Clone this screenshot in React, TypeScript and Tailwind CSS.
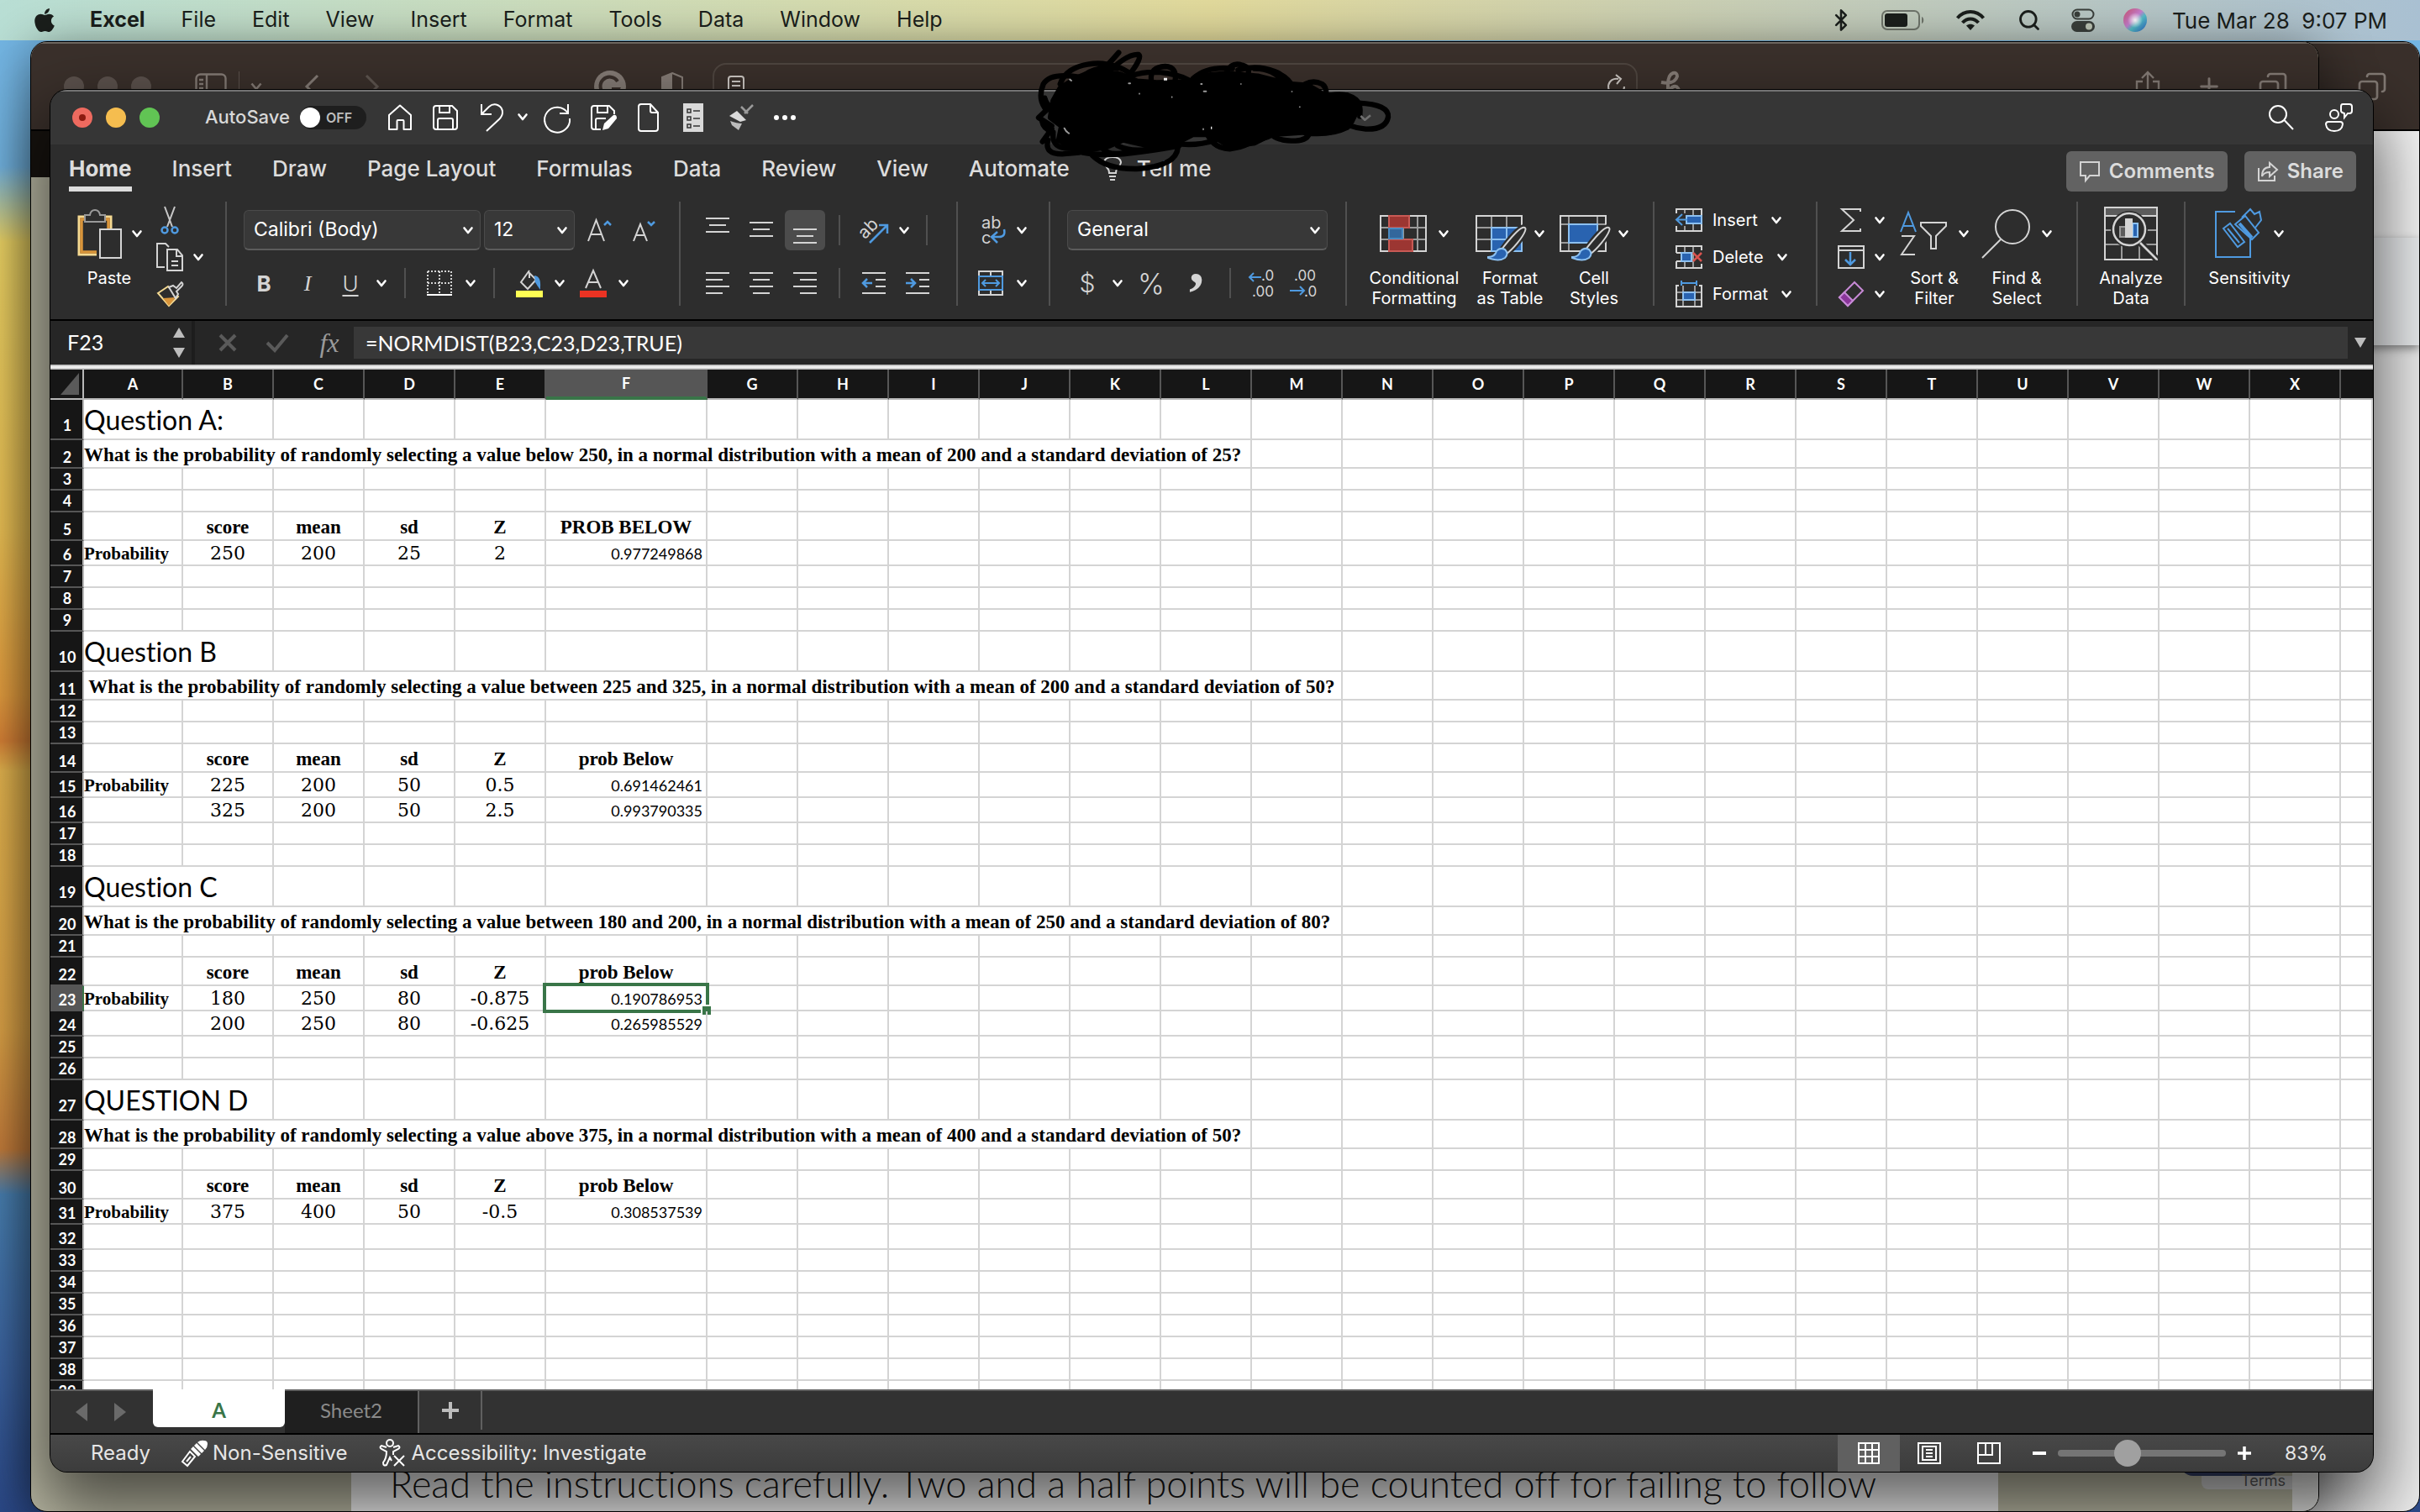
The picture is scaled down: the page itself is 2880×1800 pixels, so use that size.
import type { ReactNode } from "react";
import { Bluetooth, Copy, Plus, Search } from "lucide-react";
import { FaApple } from "react-icons/fa";
import clsx from "clsx";

const UI = "font-['Inter','Liberation_Sans',sans-serif]";
const CALIBRI = "font-['Lato','Liberation_Sans',sans-serif] [font-variant-ligatures:none]";

type SvgProps = { w: number; h: number; className?: string; children: ReactNode };

function Svg({ w, h, className, children }: SvgProps) {
  return (
    <svg
      width={w}
      height={h}
      viewBox={`0 0 ${w} ${h}`}
      fill="none"
      stroke="#d4d4d4"
      strokeWidth={2}
      className={clsx("shrink-0 overflow-visible", className)}
      aria-hidden="true"
    >
      {children}
    </svg>
  );
}

function Chevron({ className }: { className?: string }) {
  return (
    <Svg w={12} h={9} className={className}>
      <path d="M1.5 1.5 6 7l4.5-5.5" stroke="#fff" strokeWidth={2.6} strokeLinecap="round" strokeLinejoin="round" />
    </Svg>
  );
}

function IconButton({ label, className, children }: { label: string; className?: string; children: ReactNode }) {
  return (
    <button aria-label={label} className={clsx("flex shrink-0 items-center justify-center", className)}>
      {children}
    </button>
  );
}

function More({ label, className }: { label: string; className?: string }) {
  return (
    <IconButton label={label} className={clsx("h-6 w-6", className)}>
      <Chevron />
    </IconButton>
  );
}

function Divider() {
  return <div className="h-[124px] w-[2px] shrink-0 bg-[#505050]" />;
}

function SmallDivider({ className }: { className?: string }) {
  return <div className={clsx("h-9 w-[2px] shrink-0 bg-[#505050]", className)} />;
}

/* ---------- menu bar ---------- */

const menus = ["File", "Edit", "View", "Insert", "Format", "Tools", "Data", "Window", "Help"];

function MenuBar() {
  return (
    <header
      className={clsx(
        UI,
        "relative flex h-12 items-center bg-linear-to-r from-[#b9dfd5] via-[#e2da9c] to-[#a9c0d2] pr-[39px] pl-10 text-[25px] text-[#1b1f1c]",
      )}
    >
      <FaApple className="h-8 w-[26px]" />
      <nav className="ml-[41px] flex items-center gap-[43px]">
        <button className="font-bold">Excel</button>
        {menus.map((m) => (
          <button key={m}>{m}</button>
        ))}
      </nav>
      <div className="ml-auto flex items-center">
        <Bluetooth className="h-7 w-7" strokeWidth={2.2} />
        <Svg w={52} h={24} className="ml-[34px]">
          <rect x="1" y="1" width="44" height="22" rx="6" stroke="#6f756b" />
          <rect x="4" y="4" width="27" height="16" rx="3" fill="#1b1f1c" stroke="none" />
          <path d="M48 8c3 1 3 7 0 8z" fill="#6f756b" stroke="none" />
        </Svg>
        <Svg w={34} h={24} className="ml-[37px]">
          <g stroke="#1b1f1c" strokeWidth={4}>
            <path d="M1.5 9.5C10-.5 24-.5 32.5 9.5" />
            <path d="M7.5 15C13 9 21 9 26.5 15" />
          </g>
          <path d="M17 24l-5-5.500c3-2.500 7-2.500 10 0z" fill="#1b1f1c" stroke="none" />
        </Svg>
        <Search className="ml-[39px] h-7 w-7" strokeWidth={2.4} />
        <Svg w={28} h={28} className="ml-[36px]">
          <rect x="1.5" y="1.5" width="25" height="11" rx="5.5" stroke="#3a3f3b" />
          <circle cx="7" cy="7" r="3.5" fill="#3a3f3b" stroke="none" />
          <rect x="0" y="15" width="28" height="13" rx="6.5" fill="#3a3f3b" stroke="none" />
          <circle cx="21" cy="21.5" r="4" fill="#c0c8b8" stroke="none" />
        </Svg>
        <Svg w={28} h={28} className="ml-[34px]">
          <defs>
            <linearGradient id="siri" x1="0" y1="0" x2="1" y2="1">
              <stop offset="0" stopColor="#c8506a" />
              <stop offset=".45" stopColor="#c77fd0" />
              <stop offset=".6" stopColor="#55c0c8" />
              <stop offset="1" stopColor="#2c62c8" />
            </linearGradient>
            <radialGradient id="siriGlow">
              <stop offset="0" stopColor="#fff" />
              <stop offset="1" stopColor="#fff" stopOpacity="0" />
            </radialGradient>
          </defs>
          <circle cx="14" cy="14" r="14" fill="url(#siri)" stroke="none" />
          <circle cx="14" cy="14" r="9" fill="url(#siriGlow)" stroke="none" />
        </Svg>
        <span className="ml-[30px] text-[26px] whitespace-pre">Tue Mar 28{"  "}9:07 PM</span>
      </div>
    </header>
  );
}

/* ---------- browser windows behind ---------- */

function BackWindow() {
  return (
    <div className="absolute inset-y-0 top-[49px] right-0 left-[120px] flex flex-col overflow-hidden rounded-[20px] border border-black bg-[#ededed]">
      <div className="flex h-[106px] shrink-0 items-center justify-end border-t-2 border-b-2 border-t-[#6e6862] border-b-black bg-[#3a302b] pr-[38px] text-[#857c76]">
        <Copy className="h-9 w-9 -scale-x-100" strokeWidth={1.8} />
      </div>
      <div className="h-[127px] shrink-0 bg-[#f6f6f6]" />
      <div className="h-[128px] shrink-0 bg-[#eceef0] shadow-[0_4px_10px_#8a8a8a]" />
    </div>
  );
}

function BrowserToolbar() {
  return (
    <div className="flex h-[106px] shrink-0 items-center border-t-2 border-b-2 border-t-[#6e6862] border-b-black bg-[#3a302b] pr-9 pl-[39px] text-[#857c76]">
      <div className="flex gap-4">
        <span className="h-6 w-6 rounded-full bg-[#5c524d]" />
        <span className="h-6 w-6 rounded-full bg-[#5c524d]" />
        <span className="h-6 w-6 rounded-full bg-[#5c524d]" />
      </div>
      <Svg w={38} h={32} className="ml-[52px]">
        <g stroke="#857c76" strokeWidth={2.4}>
          <rect x="1.5" y="1.5" width="35" height="29" rx="5" />
          <path d="M14 2v28M5 8h5M5 13h5M5 18h5" />
        </g>
      </Svg>
      <div className="ml-[14px] h-9 w-px bg-[#5c524d]" />
      <Svg w={14} h={10} className="ml-[13px]">
        <path d="M1.5 1.5 7 8l5.5-6.5" stroke="#857c76" strokeWidth={2.6} />
      </Svg>
      <Svg w={18} h={30} className="ml-[50px]">
        <path d="M16 2 3 15l13 13" stroke="#857c76" strokeWidth={3} />
      </Svg>
      <Svg w={18} h={30} className="ml-[54px]">
        <path d="m2 2 13 13L2 28" stroke="#5f5650" strokeWidth={3} />
      </Svg>
      <Svg w={38} h={38} className="ml-[255px]">
        <circle cx="19" cy="19" r="19" fill="#857c76" stroke="none" />
        <path d="M28 13a11 11 0 1 0 1 9h-8" stroke="#3a302b" strokeWidth={4} />
      </Svg>
      <Svg w={28} h={34} className="ml-[41px]">
        <path d="M14 1 26 6v15q0 7-12 12Q2 28 2 21V6z" stroke="#857c76" />
        <path d="M14 1v32Q2 28 2 21V6z" fill="#857c76" stroke="none" />
      </Svg>
      <div className="ml-[34px] flex h-[56px] w-[1101px] items-center justify-between rounded-2xl border-2 border-[#4f4640] pr-3 pl-4">
        <Svg w={20} h={26}>
          <rect x="1" y="1" width="18" height="24" rx="3" stroke="#cfcac6" />
          <path d="M5 7h10M5 12h10M5 17h6" stroke="#cfcac6" />
        </Svg>
        <Svg w={22} h={30}>
          <path d="M13 6A9.5 9.5 0 1 0 20 15M10 1l6 5-5 6" stroke="#cfcac6" />
        </Svg>
      </div>
      <Svg w={28} h={36} className="ml-[26px]">
        <path d="M2 13q16 3 19-7 0-5-5-4-6 2-6 14v18M10 24q8-10 12-4 3 5 1 13" stroke="#857c76" strokeWidth={4} />
      </Svg>
      <div className="ml-auto flex items-center gap-[42px]">
        <Svg w={30} h={38}>
          <path d="M9 13H2v23h26V13h-7M15 25V2M8 9l7-7 7 7" stroke="#857c76" strokeWidth={2.4} />
        </Svg>
        <Plus className="h-8 w-8" strokeWidth={2.2} />
        <Copy className="h-9 w-9 -scale-x-100" strokeWidth={1.8} />
      </div>
    </div>
  );
}

function BrowserWindow() {
  return (
    <div className="absolute inset-y-0 top-[49px] right-[120px] left-9 flex flex-col overflow-hidden rounded-[20px] border border-black bg-[#bcbba6] shadow-[0_10px_60px_rgba(0,0,0,0.5)]">
      <BrowserToolbar />
      <div className="h-[55px] shrink-0 bg-[#17130f]" />
      <div className="flex flex-1">
        <div className="w-[381px]" />
        <div className="flex flex-1 items-end bg-[#f4f4f4] pl-[46px] whitespace-nowrap">
          <p className="font-['Lato',sans-serif] text-[45px] leading-[66px] font-light text-[#141414] [font-variant-ligatures:none]">
            Read the instructions carefully. Two and a half points will be counted off for failing to follow
          </p>
        </div>
        <div className="flex w-[350px] flex-col items-end justify-end pb-[26px]">
          <div className="mr-[14px] h-4 w-[120px] rounded-b-2xl bg-[#35406a]" />
          <span className={clsx(UI, "h-4 w-[108px] rounded-bl-lg bg-[#d0d0d0] pr-2 text-right text-lg leading-3 text-[#555]")}>Terms</span>
        </div>
        <div className="w-[31px] bg-[#e6e6e4]" />
      </div>
    </div>
  );
}

/* ---------- excel title bar ---------- */

function TitleBar() {
  return (
    <div className="flex h-[65px] shrink-0 items-center border-t-2 border-t-[#737373] bg-[#363636] pr-[24px] pb-[2px] pl-[26px]">
      <div className="flex gap-4">
        <button aria-label="Close" className="flex h-6 w-6 items-center justify-center rounded-full bg-[#ee6a5f]">
          <span className="h-2 w-2 rounded-full bg-[#8c1a10]" />
        </button>
        <button aria-label="Minimize" className="h-6 w-6 rounded-full bg-[#f5bd4f]" />
        <button aria-label="Zoom" className="h-6 w-6 rounded-full bg-[#61c454]" />
      </div>
      <span className="ml-[54px] w-[100px] text-[22px] font-medium whitespace-nowrap text-[#d8d8d8]">AutoSave</span>
      <button
        role="switch"
        aria-checked="false"
        aria-label="AutoSave"
        className="ml-[13px] flex h-7 w-[79px] items-center gap-[7px] rounded-full bg-[#1e1e1e] text-base font-semibold text-[#bdbdbd]"
      >
        <span className="h-6 w-6 rounded-full bg-white" />
        OFF
      </button>
      <IconButton label="Home" className="ml-[25px]">
        <Svg w={30} h={32}>
          <path d="M2 13 15 1.5 28 13v17h-8.500V20q0-1-1-1h-6q-1 0-1 1v10H2z" stroke="#fff" strokeLinejoin="round" />
        </Svg>
      </IconButton>
      <IconButton label="Save" className="ml-6">
        <Svg w={30} h={32}>
          <path d="M4 2h19l6 6v19q0 3-3 3H4q-3 0-3-3V5q0-3 3-3zM8 2v8h12V2M6 30V19q0-2 2-2h14q2 0 2 2v11" stroke="#fff" />
        </Svg>
      </IconButton>
      <IconButton label="Undo" className="ml-[26px]">
        <Svg w={30} h={34}>
          <path d="M2 1v12h12M2 13 11 4C18-2 27 3 27 11q0 4-4 8L8 33" stroke="#fff" />
        </Svg>
      </IconButton>
      <More label="Undo options" className="ml-[9px]" />
      <IconButton label="Redo" className="ml-[12px]">
        <Svg w={34} h={34}>
          <path d="M30 12A15 15 0 1 0 32 18M30 1v11H20" stroke="#fff" />
        </Svg>
      </IconButton>
      <IconButton label="Save As" className="ml-[23px]">
        <Svg w={32} h={32}>
          <path d="M12 30H4q-3 0-3-3V5q0-3 3-3h18l6 6v4M8 2v8h12V2M6 30V19q0-2 2-2h10" stroke="#fff" />
          <path d="m14 31 2-8 11-10q4-1 4 4L21 29z" fill="#fff" stroke="none" />
        </Svg>
      </IconButton>
      <IconButton label="New" className="ml-6">
        <Svg w={26} h={34}>
          <path d="M4 1h11l9 10v19q0 3-3 3H4q-3 0-3-3V4q0-3 3-3zM15 1v8q0 2 2 2h7" stroke="#fff" />
        </Svg>
      </IconButton>
      <IconButton label="Form" className="ml-[28px]">
        <Svg w={24} h={34}>
          <rect width="24" height="34" fill="#d9d9d9" stroke="none" />
          <path d="M5 7h4v4H5zM5 16h4v4H5zM5 25h4v4H5zM12 9h8M12 18h8M12 27h8" stroke="#333" strokeWidth={1.5} />
        </Svg>
      </IconButton>
      <IconButton label="Clear formatting" className="ml-[26px]">
        <Svg w={34} h={34}>
          <path d="M33 2 23 12M19 4l8 8" stroke="#9a9a9a" strokeWidth={2.5} />
          <path d="m5 15 9-6 11 11-7 2z" fill="#d9d9d9" stroke="none" />
          <path d="M6 21q8 3 14 3l-4 8-8-6z" fill="#bdbdbd" stroke="none" />
        </Svg>
      </IconButton>
      <IconButton label="More" className="ml-[24px] gap-1">
        <span className="h-[6px] w-[6px] rounded-full bg-white" />
        <span className="h-[6px] w-[6px] rounded-full bg-white" />
        <span className="h-[6px] w-[6px] rounded-full bg-white" />
      </IconButton>
      <div className="ml-auto flex items-center gap-9">
        <IconButton label="Search">
          <Svg w={30} h={30}>
            <path d="M19 18.5 29 29M21 11A10 10 0 1 1 1 11a10 10 0 0 1 20 0z" stroke="#fff" />
          </Svg>
        </IconButton>
        <IconButton label="Presence">
          <Svg w={34} h={34}>
            <g stroke="#fff">
              <circle cx="12" cy="13" r="5" />
              <path d="M5 22h14q3 0 3 3-1 8-10 8T2 25q0-3 3-3z" />
              <path d="M22 1h8q3 0 3 3v5q0 3-3 3h-2l-4 5v-5q-4-1-4-3V4q0-3 2-3z" />
            </g>
          </Svg>
        </IconButton>
      </div>
    </div>
  );
}

const tabs = ["Insert", "Draw", "Page Layout", "Formulas", "Data", "Review", "View", "Automate"];

function TabStrip() {
  return (
    <div className="flex h-[68px] shrink-0 items-start pr-5 pl-[22px] text-[#dcdcdc]">
      <nav className="flex items-start gap-12 pt-3 text-[26px] font-medium">
        <button className="border-b-[6px] border-[#dcdcdc] pb-1 leading-[34px] font-bold">Home</button>
        {tabs.map((t) => (
          <button key={t} className="leading-[34px]">
            {t}
          </button>
        ))}
      </nav>
      <button className="ml-10 flex items-center gap-[18px] pt-3 text-[26px] leading-[34px] font-medium">
        <Svg w={22} h={30}>
          <path d="M7 20q0-4-3-7-3-4-3-6 1-6 10-6t10 6q0 2-3 6-3 3-3 7zM7 24h8M8 28h6" />
        </Svg>
        Tell me
      </button>
      <button className="mt-2 ml-auto flex h-12 items-center gap-[10px] rounded-md bg-[#626262] px-[15px] text-2xl font-semibold">
        <Svg w={26} h={26}>
          <path d="M2 2h22v16H13l-5 6v-6H2z" />
        </Svg>
        Comments
      </button>
      <button className="mt-2 ml-5 flex h-12 items-center gap-[10px] rounded-md bg-[#626262] px-[15px] text-2xl font-semibold">
        <Svg w={26} h={26}>
          <path d="M2 9v15h19v-6M15 3l9 8-9 8v-5q-7 0-9 5 0-11 9-11z" />
        </Svg>
        Share
      </button>
    </div>
  );
}

/* ---------- ribbon ---------- */

function BigButton({ icon, lines, chevron, className }: { icon: ReactNode; lines: string[]; chevron?: boolean; className?: string }) {
  return (
    <button className={clsx("flex shrink-0 flex-col items-center pt-[6px] text-white", className)}>
      <span className="flex h-16 items-center">
        {icon}
        {chevron && <Chevron className="ml-[14px]" />}
      </span>
      <span className="mt-[9px] text-center text-xl leading-6 whitespace-nowrap">
        {lines.map((l) => (
          <span key={l} className="block">
            {l}
          </span>
        ))}
      </span>
    </button>
  );
}

function Dropdown({ label, value, className }: { label: string; value: string; className: string }) {
  return (
    <div className={clsx("relative shrink-0", className)}>
      <select
        aria-label={label}
        className="h-12 w-full appearance-none rounded-md border border-b-2 border-[#4a4a4a] border-b-[#5c5c5c] bg-[#383838] pl-[11px] text-[23px] text-white"
      >
        <option>{value}</option>
      </select>
      <Chevron className="pointer-events-none absolute top-5 right-[9px]" />
    </div>
  );
}

function Lines({ d }: { d: string }) {
  return (
    <Svg w={28} h={28}>
      <path d={d} />
    </Svg>
  );
}

const BLUE = "#4f9ae0";

function ClipboardGroup() {
  return (
    <div className="flex w-[208px] shrink-0">
      <BigButton
        className="ml-8 w-[76px]"
        chevron
        lines={["Paste"]}
        icon={
          <Svg w={56} h={60} className="-mr-1">
            <path d="M24 55H3V10h38v15" stroke="#f5da92" strokeWidth={3} />
            <path d="M24 52H6V13h32v12" stroke="#d8943a" strokeWidth={3.5} />
            <path d="M10 8h6q1-6 6-6t6 6h6v8H10z" fill="#2d2d2d" stroke="#9a9a9a" />
            <path d="M28 25h25v34H28z" fill="#2d2d2d" />
          </Svg>
        }
      />
      <div className="ml-[18px] flex flex-col">
        <IconButton label="Cut" className="h-11 w-8">
          <Svg w={22} h={34}>
            <path d="M5 1 14 25M17 1 8 25" stroke="#c8c8c8" />
            <circle cx="5" cy="29" r="3.5" stroke={BLUE} strokeWidth={2.5} />
            <circle cx="17" cy="29" r="3.5" stroke={BLUE} strokeWidth={2.5} />
          </Svg>
        </IconButton>
        <div className="flex h-11 items-center">
          <IconButton label="Copy" className="w-8">
            <Svg w={32} h={34}>
              <path d="M10 29H1V1h10l4 4M13 8h12l6 7v18H13zM24 8v8h7M18 22h8M18 27h8" />
            </Svg>
          </IconButton>
          <More label="Copy options" className="ml-[6px]" />
        </div>
        <IconButton label="Format painter" className="h-11 w-8">
          <Svg w={32} h={32}>
            <path d="M2 15l12-8 12 12-11 11z" stroke="#f5da92" />
            <path d="m8 21 15-1-8 10z" fill="#d8943a" stroke="none" />
            <path d="M15 8l5-2 4 3 6-7q3 2 0 5l-6 6 2 3-3 5z" fill="#2d2d2d" />
          </Svg>
        </IconButton>
      </div>
    </div>
  );
}

function FontGroup() {
  return (
    <div className="flex w-[538px] shrink-0 flex-col gap-[15px] pt-[10px] text-[#d4d4d4]">
      <div className="flex h-12 items-center pl-5">
        <Dropdown label="Font" value="Calibri (Body)" className="w-[282px]" />
        <Dropdown label="Font size" value="12" className="ml-1 w-[108px]" />
        <IconButton label="Increase font size" className="ml-[14px]">
          <Svg w={32} h={28}>
            <path d="M2 27 11.5 2 21 27M5 19h13" />
            <path d="m21 8 4-4 4 4" stroke={BLUE} strokeWidth={2.5} />
          </Svg>
        </IconButton>
        <IconButton label="Decrease font size" className="ml-[22px]">
          <Svg w={30} h={28}>
            <path d="M2 27 10 7l8 20M5 20h10" />
            <path d="m19 4 4 4 4-4" stroke={BLUE} strokeWidth={2.5} />
          </Svg>
        </IconButton>
      </div>
      <div className="flex h-12 items-center pl-[18px] text-[26px]">
        <button aria-label="Bold" className="w-[52px] font-bold">
          B
        </button>
        <button aria-label="Italic" className="w-[52px] font-['Liberation_Serif',serif] italic">
          I
        </button>
        <button aria-label="Underline" className="w-[50px] font-light underline underline-offset-4">
          U
        </button>
        <More label="Underline options" />
        <SmallDivider className="ml-[15px]" />
        <IconButton label="Borders" className="ml-[25px]">
          <Svg w={30} h={30}>
            <path d="M1 1h28M1 15h28M1 1v26M15 1v26M29 1v26" strokeDasharray="2 2" />
            <path d="M0 29h30" stroke="#fff" />
          </Svg>
        </IconButton>
        <More label="Border options" className="ml-[10px]" />
        <SmallDivider className="ml-[15px]" />
        <IconButton label="Fill colour" className="ml-[25px]">
          <Svg w={32} h={34}>
            <path d="m16 2-10 14 8 8 10-11-8-8v6" />
            <path d="M22 9q7 1 6 13-4-6-5-8" fill={BLUE} stroke={BLUE} />
            <path d="M0 26h32v8H0z" fill="#ffff54" stroke="none" />
          </Svg>
        </IconButton>
        <More label="Fill options" className="ml-2" />
        <IconButton label="Font colour" className="ml-3">
          <Svg w={32} h={34}>
            <path d="M7 23 16 2l9 21M10 16h12" />
            <path d="M0 26h32v8H0z" fill="#eb3323" stroke="none" />
          </Svg>
        </IconButton>
        <More label="Font colour options" className="ml-2" />
      </div>
    </div>
  );
}

function AlignGroup() {
  return (
    <div className="flex w-[328px] shrink-0 flex-col gap-[15px] pt-[10px]">
      <div className="flex h-12 items-center pl-5">
        <IconButton label="Top align" className="h-12 w-12">
          <Lines d="M0 0h28M4 8h20M0 16h28" />
        </IconButton>
        <IconButton label="Middle align" className="ml-1 h-12 w-12">
          <Lines d="M0 5h28M4 13h20M0 21h28" />
        </IconButton>
        <IconButton label="Bottom align" className="ml-1 h-12 w-12 rounded-md bg-[#4c4c4c]">
          <Lines d="M0 13h28M4 21h20M0 29h28" />
        </IconButton>
        <SmallDivider className="ml-4" />
        <IconButton label="Orientation" className="ml-6">
          <Svg w={34} h={34}>
            <text x="0" y="24" fontSize="21" fill="#d4d4d4" stroke="none" transform="rotate(-45 8 20)" fontFamily="Inter">
              ab
            </text>
            <path d="m11 32 20-20M22 11h10v10" stroke={BLUE} strokeWidth={2.5} />
          </Svg>
        </IconButton>
        <More label="Orientation options" className="ml-[6px]" />
        <SmallDivider className="ml-[14px]" />
      </div>
      <div className="flex h-12 items-center pl-5">
        <IconButton label="Align left" className="h-12 w-12">
          <Lines d="M0 2h28M0 10h20M0 18h28M0 26h20" />
        </IconButton>
        <IconButton label="Centre" className="ml-1 h-12 w-12">
          <Lines d="M0 2h28M4 10h20M0 18h28M4 26h20" />
        </IconButton>
        <IconButton label="Align right" className="ml-1 h-12 w-12">
          <Lines d="M0 2h28M8 10h20M0 18h28M8 26h20" />
        </IconButton>
        <SmallDivider className="ml-4" />
        <IconButton label="Decrease indent" className="ml-[26px]">
          <Svg w={28} h={28}>
            <path d="M0 2h28M16 10h12M16 18h12M0 26h28" />
            <path d="M12 14H2M6 9l-5 5 5 5" stroke={BLUE} strokeWidth={2.5} />
          </Svg>
        </IconButton>
        <IconButton label="Increase indent" className="ml-6">
          <Svg w={28} h={28}>
            <path d="M0 2h28M16 10h12M16 18h12M0 26h28" />
            <path d="M0 14h10M6 9l5 5-5 5" stroke={BLUE} strokeWidth={2.5} />
          </Svg>
        </IconButton>
      </div>
    </div>
  );
}

function WrapGroup() {
  return (
    <div className="flex w-[108px] shrink-0 flex-col gap-[15px] pt-[10px] pl-6">
      <div className="flex h-12 items-center">
        <IconButton label="Wrap text">
          <Svg w={34} h={36}>
            <g fill="#d4d4d4" stroke="none" fontFamily="Inter" fontSize="20">
              <text x="4" y="16">ab</text>
              <text x="4" y="34">c</text>
            </g>
            <path d="M31 17q2 9-6 9h-8M23 20l-7 6 7 7" stroke={BLUE} strokeWidth={2.5} />
          </Svg>
        </IconButton>
        <More label="Wrap options" className="ml-[6px]" />
      </div>
      <div className="flex h-12 items-center">
        <IconButton label="Merge">
          <Svg w={30} h={30}>
            <path d="M1 1h28v28H1zM15 1v28" />
            <path d="M1 7h28v16H1z" fill="#2d2d2d" stroke={BLUE} />
            <path d="M5 15h20M9 11l-4 4 4 4M21 11l4 4-4 4" stroke={BLUE} />
          </Svg>
        </IconButton>
        <More label="Merge options" className="ml-[10px]" />
      </div>
    </div>
  );
}

function NumberGroup() {
  return (
    <div className="flex w-[351px] shrink-0 flex-col gap-[15px] pt-[10px] text-[#d4d4d4]">
      <div className="flex h-12 items-center pl-5">
        <Dropdown label="Number format" value="General" className="w-[310px]" />
      </div>
      <div className="flex h-12 items-center pl-7">
        <button aria-label="Currency" className="w-8 text-[30px] font-light">
          $
        </button>
        <More label="Currency options" className="ml-2" />
        <button aria-label="Percent" className="ml-2 w-10 text-[34px] font-light">
          %
        </button>
        <IconButton label="Comma style" className="ml-[22px] w-6">
          <Svg w={20} h={28}>
            <text x="1" y="14" fontSize="72" fontWeight="700" fill="#d4d4d4" stroke="none" fontFamily="Liberation Serif">
              ,
            </text>
          </Svg>
        </IconButton>
        <SmallDivider className="ml-[27px]" />
        <IconButton label="Increase decimal" className="ml-[19px]">
          <Svg w={34} h={34}>
            <g fill="#d4d4d4" stroke="none" fontFamily="Inter" fontSize="17">
              <text x="17" y="14">.0</text>
              <text x="6" y="33">.00</text>
            </g>
            <path d="M17 10H3M8 5l-5 5 5 5" stroke={BLUE} />
          </Svg>
        </IconButton>
        <IconButton label="Decrease decimal" className="ml-[17px]">
          <Svg w={34} h={34}>
            <g fill="#d4d4d4" stroke="none" fontFamily="Inter" fontSize="17">
              <text x="5" y="14">.00</text>
              <text x="17" y="33">.0</text>
            </g>
            <path d="M0 26h16M12 21l5 5-5 5" stroke={BLUE} />
          </Svg>
        </IconButton>
      </div>
    </div>
  );
}

function Brush() {
  return (
    <>
      <path d="M31 42C38 32 50 17 56 15q5-1 3 4C56 27 44 41 37 46z" fill="#2d2d2d" stroke="#2d2d2d" strokeWidth={7} />
      <path d="M31 41C38 32 50 17 56 15q5-1 3 4C56 27 44 41 37 46" fill="#2d2d2d" />
      <path d="M15 50q8 0 10-7 4-5 10-2 5 5 0 10-7 5-20 0z" fill="#2963b0" stroke="#8cc0f0" />
    </>
  );
}

function StylesGroup() {
  return (
    <div className="flex w-[364px] shrink-0 pl-[23px]">
      <BigButton
        className="w-[114px]"
        chevron
        lines={["Conditional", "Formatting"]}
        icon={
          <Svg w={56} h={44}>
            <path d="M1 15h54M1 29h54M11 1v42M28 1v42M45 1v42" stroke="#9a9a9a" />
            <path d="M1 1h54v42H1z" />
            <path d="M11 1h24v14H11zM11 29h28v14H11z" fill="#9c3632" stroke="#c85a55" />
            <path d="M11 16h16v12H11z" fill="#33679c" stroke="#4a8ac0" />
          </Svg>
        }
      />
      <BigButton
        className="w-[114px]"
        chevron
        lines={["Format", "as Table"]}
        icon={
          <Svg w={60} h={54} className="mt-[10px] -mr-1">
            <path d="M1 15h54M1 29h54M19 1v42M37 1v42" stroke="#9a9a9a" />
            <path d="M1 1h54v42H1z" />
            <path d="M19 15h36v28H19zM19 29h36M37 15v28" fill="#2963b0" stroke="#8cc0f0" />
            <Brush />
          </Svg>
        }
      />
      <BigButton
        className="w-[86px]"
        chevron
        lines={["Cell", "Styles"]}
        icon={
          <Svg w={60} h={54} className="mt-[10px] -mr-1">
            <path d="M1 11h54M1 33h54M11 1v42M45 1v42" stroke="#9a9a9a" />
            <path d="M1 1h54v42H1z" />
            <path d="M11 11h34v22H11z" fill="#2963b0" stroke="#8cc0f0" />
            <Brush />
          </Svg>
        }
      />
    </div>
  );
}

function CellsGroup() {
  const rows = [
    {
      label: "Insert",
      icon: (
        <>
          <path d="M1 11h30M1 20h30M11 3v26M21 3v26" stroke="#9a9a9a" />
          <path d="M1 3h30v26H1z" />
          <path d="M13 11h18v9H13z" fill="#2963b0" stroke="#8cc0f0" />
          <path d="M0 8h12v15H0z" fill="#2d2d2d" stroke="none" />
          <path d="M14 15.5H1M8 9l-7 6.5 7 6.5" stroke={BLUE} />
        </>
      ),
    },
    {
      label: "Delete",
      icon: (
        <>
          <path d="M11 3v26M21 3v26" stroke="#9a9a9a" />
          <path d="M1 11V3h30v5M1 21v8h30v-5M1 11h8M1 21h8" />
          <path d="M7 11h12v10H7z" fill="#2963b0" stroke="#8cc0f0" />
          <path d="m21 11 10 10M31 11 21 21" stroke="#d9534f" strokeWidth={2.5} />
        </>
      ),
    },
    {
      label: "Format",
      icon: (
        <>
          <path d="M1 14h30M1 23h30M9 6v25M23 6v25" stroke="#9a9a9a" />
          <path d="M4 6H1v25h30V6h-3" />
          <path d="M9 14h14v9H9z" fill="#2963b0" stroke="#8cc0f0" />
          <path d="M7 3h18M7 0v6M25 0v6" stroke={BLUE} />
        </>
      ),
    },
  ];
  return (
    <div className="flex w-[192px] shrink-0 flex-col pl-[25px]">
      {rows.map((r) => (
        <button key={r.label} className="flex h-11 items-center text-xl text-white">
          <Svg w={32} h={32}>{r.icon}</Svg>
          <span className="ml-3">{r.label}</span>
          <Chevron className="ml-4" />
        </button>
      ))}
    </div>
  );
}

function EditingGroup() {
  return (
    <div className="flex w-[308px] shrink-0">
      <div className="ml-[24px] flex flex-col">
        <div className="flex h-11 items-center">
          <IconButton label="AutoSum" className="w-8">
            <Svg w={26} h={28}>
              <path d="M24 4V1H2l14 13L2 27h22v-3" />
            </Svg>
          </IconButton>
          <More label="AutoSum options" className="ml-[6px]" />
        </div>
        <div className="flex h-11 items-center">
          <IconButton label="Fill" className="w-8">
            <Svg w={32} h={28}>
              <path d="M1 1h30v26H1zM1 6h30" />
              <path d="M15 8v14M9 17l6 6 6-6" stroke={BLUE} strokeWidth={2.5} />
            </Svg>
          </IconButton>
          <More label="Fill options" className="ml-[6px]" />
        </div>
        <div className="flex h-11 items-center">
          <IconButton label="Clear" className="w-8">
            <Svg w={32} h={32}>
              <path d="M20 2l10 10-18 18L2 20z" stroke="#c78ad6" />
              <path d="m8 14 10 10-6 6L2 20z" fill="#8a359a" stroke="#c78ad6" />
            </Svg>
          </IconButton>
          <More label="Clear options" className="ml-[6px]" />
        </div>
      </div>
      <BigButton
        className="ml-[10px] w-[86px]"
        chevron
        lines={["Sort &", "Filter"]}
        icon={
          <Svg w={56} h={54}>
            <path d="M1 25 10 2l9 23M4 18h12" stroke={BLUE} />
            <path d="M2 30h15L2 52h16" />
            <path d="M25 14h30v4L43 30v15h-6V30L25 18z" />
          </Svg>
        }
      />
      <BigButton
        className="ml-3 w-[86px]"
        chevron
        lines={["Find &", "Select"]}
        icon={
          <Svg w={58} h={60}>
            <path d="M1 59 23 37" />
            <circle cx="37" cy="22" r="20" />
          </Svg>
        }
      />
    </div>
  );
}

function Ribbon() {
  return (
    <div className="flex h-[142px] shrink-0 border-b-2 border-black">
      <ClipboardGroup />
      <Divider />
      <FontGroup />
      <Divider />
      <AlignGroup />
      <Divider />
      <WrapGroup />
      <Divider />
      <NumberGroup />
      <Divider />
      <StylesGroup />
      <Divider />
      <CellsGroup />
      <Divider />
      <EditingGroup />
      <Divider />
      <BigButton
        className="w-[126px]"
        lines={["Analyze", "Data"]}
        icon={
          <Svg w={64} h={64}>
            <path d="M1 1h62v9H1z" fill="#5c5c5c" stroke="none" />
            <path d="M1 28h62M1 45h62M21 45v18M42 45v18" stroke="#9a9a9a" />
            <path d="M1 1h62v62H1zM1 11h62" />
            <circle cx="30" cy="27" r="22" fill="#2d2d2d" stroke="none" />
            <circle cx="30" cy="27" r="19" strokeWidth={2.5} />
            <path d="m43 43 20 20" stroke="#2d2d2d" strokeWidth={8} />
            <path d="m43 43 20 20" strokeWidth={2.5} />
            <path d="M19 24h7v12h-7z" fill="#5c5c5c" stroke="#9a9a9a" />
            <path d="M34 20h6v16h-6z" fill="#2963b0" stroke="#8cc0f0" />
            <path d="M25 14h9v23h-9z" fill="#d4d4d4" stroke="none" />
          </Svg>
        }
      />
      <Divider />
      <BigButton
        className="ml-6 w-[104px]"
        chevron
        lines={["Sensitivity"]}
        icon={
          <Svg w={56} h={62}>
            <g stroke={BLUE}>
              <path d="M24 5H1v54h41V32" />
              <path d="m10 25 8-6 17 22-8 6zM15 25l14 17" />
              <path d="m24 20 12-10 16 20-8 8z" fill="#2d2d2d" />
              <path d="m29 19 15 17" strokeWidth={4} />
              <path d="m32 12 10-10 5 6 6-3 2 10-7 9" />
            </g>
          </Svg>
        }
      />
    </div>
  );
}

/* ---------- formula bar ---------- */

function FormulaBar() {
  return (
    <div className={clsx(CALIBRI, "flex h-[52px] shrink-0 items-center bg-[#262626] text-white")}>
      <input aria-label="Name box" defaultValue="F23" className="w-[120px] bg-transparent pl-5 text-[25px]" />
      <Svg w={14} h={38} className="ml-[26px]">
        <path d="M7 1l7 12H0zM7 37 0 25h14z" fill="#bdbdbd" stroke="none" />
      </Svg>
      <div className="ml-2 h-full w-1 bg-[#1d1d1d]" />
      <IconButton label="Cancel" className="ml-7">
        <Svg w={22} h={22}>
          <path d="m2 2 18 18M20 2 2 20" stroke="#5a5a5a" strokeWidth={4} />
        </Svg>
      </IconButton>
      <IconButton label="Enter" className="ml-[34px]">
        <Svg w={28} h={22}>
          <path d="m2 11 9 9L26 2" stroke="#5a5a5a" strokeWidth={4} />
        </Svg>
      </IconButton>
      <button
        aria-label="Insert function"
        className="ml-[28px] w-10 font-['Liberation_Serif',serif] text-[32px] leading-8 text-[#9a9a9a] italic"
      >
        fx
      </button>
      <input
        aria-label="Formula"
        defaultValue="=NORMDIST(B23,C23,D23,TRUE)"
        className="ml-[9px] h-[38px] min-w-0 flex-1 bg-[#383838] pl-[14px] text-[25px]"
      />
      <Svg w={14} h={12} className="mx-2">
        <path d="M0 0h14L7 12z" fill="#bdbdbd" stroke="none" />
      </Svg>
    </div>
  );
}

/* ---------- sheet ---------- */

type Cells = { title?: string; question?: string; span?: number; head?: string; data?: string[] };
type Row = Cells & { h: string };

const H26 = "h-[26px]";
const H30 = "h-[30px]";
const H34 = "h-[34px]";
const H48 = "h-[48px]";
const blank: Row = { h: H26 };

const rows: Row[] = [
  { h: H48, title: "Question A:" },
  {
    h: H34,
    span: 12,
    question:
      "What is the probability of randomly selecting a value below 250, in a normal distribution with a mean of 200 and a standard deviation of 25?",
  },
  blank,
  blank,
  { h: H34, head: "PROB BELOW" },
  { h: H30, data: ["Probability", "250", "200", "25", "2", "0.977249868"] },
  blank,
  blank,
  blank,
  { h: H48, title: "Question B" },
  {
    h: H34,
    span: 13,
    question:
      " What is the probability of randomly selecting a value between 225 and 325, in a normal distribution with a mean of 200 and a standard deviation of 50?",
  },
  blank,
  blank,
  { h: H34, head: "prob Below" },
  { h: H30, data: ["Probability", "225", "200", "50", "0.5", "0.691462461"] },
  { h: H30, data: ["", "325", "200", "50", "2.5", "0.993790335"] },
  blank,
  blank,
  { h: H48, title: "Question C" },
  {
    h: H34,
    span: 13,
    question:
      "What is the probability of randomly selecting a value between 180 and 200, in a normal distribution with a mean of 250 and a standard deviation of 80?",
  },
  blank,
  { h: H34, head: "prob Below" },
  { h: H30, data: ["Probability", "180", "250", "80", "-0.875", "0.190786953"] },
  { h: H30, data: ["", "200", "250", "80", "-0.625", "0.265985529"] },
  blank,
  blank,
  { h: H48, title: "QUESTION D" },
  {
    h: H34,
    span: 12,
    question:
      "What is the probability of randomly selecting a value above 375, in a normal distribution with a mean of 400 and a standard deviation of 50?",
  },
  blank,
  { h: H34, head: "prob Below" },
  { h: H30, data: ["Probability", "375", "400", "50", "-0.5", "0.308537539"] },
  { h: H30 },
  blank,
  blank,
  blank,
  blank,
  blank,
  blank,
  blank,
];

const columns = "ABCDEFGHIJKLMNOPQRSTUVWX".split("");
const CELL = "border-r-2 border-b-2 border-[#d4d4d4] px-0 pb-0";
const SERIF_BOLD = "font-['Liberation_Serif',serif] font-bold";

function empties(n: number) {
  return Array.from({ length: n }, (_, i) => <td key={`e${i}`} className={clsx(CELL, "pt-0")} />);
}

function rowCells(row: Row, selected: boolean) {
  if (row.title) {
    return (
      <>
        <td colSpan={2} className={clsx(CELL, "pt-0 align-bottom text-[32px] leading-[44px] whitespace-nowrap")}>
          {row.title}
        </td>
        {empties(23)}
      </>
    );
  }
  if (row.question) {
    return (
      <>
        <td colSpan={row.span} className={clsx(CELL, SERIF_BOLD, "pt-1 text-[23px] leading-7 whitespace-pre")}>
          {row.question}
        </td>
        {empties(25 - (row.span ?? 0))}
      </>
    );
  }
  if (row.head) {
    return (
      <>
        {empties(1)}
        {["score", "mean", "sd", "Z", row.head].map((t) => (
          <td key={t} className={clsx(CELL, SERIF_BOLD, "pt-1 text-center text-[23px] leading-7")}>
            {t}
          </td>
        ))}
        {empties(19)}
      </>
    );
  }
  if (row.data) {
    const [first, ...rest] = row.data;
    const result = rest.pop();
    return (
      <>
        <td className={clsx(CELL, SERIF_BOLD, "pt-[2px] text-[21px] leading-[26px]")}>{first}</td>
        {rest.map((t, i) => (
          <td key={i} className={clsx(CELL, "pt-[2px] text-center font-['DejaVu_Serif',serif] text-[22px] leading-[26px]")}>
            {t}
          </td>
        ))}
        <td className="relative border-r-2 border-b-2 border-[#d4d4d4] p-0 pr-1 text-right align-bottom text-lg leading-[26px]">
          {result}
          {selected && (
            <span className="absolute -inset-x-1 -inset-y-1 border-4 border-[#397548]">
              <span className="absolute -right-[6px] -bottom-[6px] h-3 w-3 border-t-2 border-l-2 border-white bg-[#397548]" />
            </span>
          )}
        </td>
        {empties(19)}
      </>
    );
  }
  return empties(25);
}

function Sheet() {
  return (
    <div className={clsx(CALIBRI, "min-h-0 flex-1 overflow-hidden bg-white text-black")}>
      <table className="w-full table-fixed border-separate border-spacing-0">
        <colgroup>
          <col className="w-10" />
          <col className="w-[118px]" />
          {columns.slice(1).map((c) => (
            <col key={c} className={c === "F" ? "w-[192px]" : "w-[108px]"} />
          ))}
          <col />
        </colgroup>
        <thead>
          <tr className="h-9 bg-[#161616] text-lg text-white">
            <th aria-label="Select all" className="border-r-2 border-b-2 border-[#b8b8b8] p-0">
              <Svg w={24} h={28} className="ml-[11px]">
                <path d="M23 1v26H1z" fill="#5a5a5a" stroke="none" />
              </Svg>
            </th>
            {columns.map((c) => (
              <th
                key={c}
                className={clsx(
                  "border-r-2 p-0",
                  c === "F"
                    ? "border-b-4 border-r-[#565656] border-b-[#397548] bg-[#565656]"
                    : "border-b-2 border-r-[#565656] border-b-[#b8b8b8]",
                )}
              >
                {c}
              </th>
            ))}
            <th className="border-b-2 border-[#b8b8b8] p-0" />
          </tr>
        </thead>
        <tbody>
          {rows.map((row, i) => {
            const selected = i === 22;
            return (
              <tr key={i} className={row.h}>
                <th
                  className={clsx(
                    "border-r-2 border-b-2 pt-0 pr-0 pl-[2px] align-bottom text-lg leading-6 text-white",
                    row.title ? "pb-1" : "pb-0",
                    selected ? "border-r-[#397548] border-b-[#565656] bg-[#565656]" : "border-r-[#b8b8b8] border-b-[#565656] bg-[#161616]",
                  )}
                >
                  {i + 1}
                </th>
                {rowCells(row, selected)}
              </tr>
            );
          })}
        </tbody>
      </table>
    </div>
  );
}

function SheetTabs() {
  return (
    <div className={clsx(CALIBRI, "flex h-[52px] shrink-0 border-t-2 border-[#606060] bg-[#323232] text-2xl font-bold")}>
      <IconButton label="Previous sheet" className="ml-[30px]">
        <Svg w={14} h={22}>
          <path d="M14 0v22L0 11z" fill="#6a6a6a" stroke="none" />
        </Svg>
      </IconButton>
      <IconButton label="Next sheet" className="ml-8">
        <Svg w={14} h={22}>
          <path d="M0 0v22l14-11z" fill="#6a6a6a" stroke="none" />
        </Svg>
      </IconButton>
      <button className="-mt-[2px] ml-8 h-[45px] w-[157px] rounded-b-md bg-white pt-1 text-[#397548]">A</button>
      <button className="w-[160px] border-r-2 border-[#606060] bg-[#1f1f1f] pb-1 font-normal text-[#8a8a8a]">Sheet2</button>
      <IconButton label="Add sheet" className="h-[46px] w-[75px] border-r-2 border-[#606060]">
        <Svg w={20} h={20}>
          <path d="M10 0v20M0 10h20" stroke="#bdbdbd" strokeWidth={4} />
        </Svg>
      </IconButton>
    </div>
  );
}

function StatusBar() {
  return (
    <footer className="flex h-[46px] shrink-0 items-center border-t-2 border-black bg-linear-to-b from-[#484848] to-[#3c3c3c] pr-[54px] pl-12 text-2xl text-[#e6e6e6]">
      <span className="w-[69px]">Ready</span>
      <button className="ml-[38px] flex items-center gap-[6px]">
        <Svg w={32} h={34}>
          <path d="m2 27 6 5 9-11-6-6z" stroke="#fff" />
          <path d="m7 27 5-6" stroke="#fff" />
          <path d="m12 12 9 9 3-3-9-9zM16 8l9 9 3-3-9-9zM20 4l9 9q3-3 3-7 0-4-4-4-4-1-8 2z" fill="#fff" stroke="none" />
        </Svg>
        Non-Sensitive
      </button>
      <button className="ml-[38px] flex items-center gap-[6px]">
        <Svg w={32} h={34}>
          <g stroke="#fff">
            <circle cx="13" cy="5" r="4" />
            <path d="M9 10 3 8q-3 2 0 4l6 3q0 8-4 13 0 5 4 3l4-9 2 4M17 10l6-2q3 2 0 4l-6 3v4" />
            <path d="m18 20 12 12M30 20 18 32" />
          </g>
        </Svg>
        Accessibility: Investigate
      </button>
      <div className="ml-auto flex h-full items-center text-[23px]">
        <IconButton label="Normal view" className="h-full w-[74px] bg-[#606060]">
          <Svg w={26} h={26}>
            <path d="M1 1h24v24H1zM9 1v24M17 1v24M1 9h24M1 17h24" stroke="#fff" />
          </Svg>
        </IconButton>
        <IconButton label="Page layout" className="ml-[21px]">
          <Svg w={28} h={26}>
            <path d="M1 1h26v24H1zM6 5h16v16H6zM10 9h8M10 13h8M10 17h8" stroke="#fff" />
          </Svg>
        </IconButton>
        <IconButton label="Page break preview" className="ml-[43px]">
          <Svg w={28} h={26}>
            <path d="M1 1h26v24H1zM1 15h17V1M10 1v14" stroke="#fff" />
          </Svg>
        </IconButton>
        <IconButton label="Zoom out" className="ml-[38px]">
          <span className="h-1 w-4 bg-white" />
        </IconButton>
        <input
          type="range"
          aria-label="Zoom"
          defaultValue={40}
          className="ml-[14px] h-2 w-[200px] appearance-none rounded-full bg-[#757575] [&::-webkit-slider-thumb]:h-8 [&::-webkit-slider-thumb]:w-8 [&::-webkit-slider-thumb]:appearance-none [&::-webkit-slider-thumb]:rounded-full [&::-webkit-slider-thumb]:bg-[#a0a0a0]"
        />
        <IconButton label="Zoom in" className="ml-[14px]">
          <Svg w={16} h={16}>
            <path d="M8 0v16M0 8h16" stroke="#fff" strokeWidth={3.5} />
          </Svg>
        </IconButton>
        <span className="ml-10">83%</span>
      </div>
    </footer>
  );
}

function ExcelWindow() {
  return (
    <main
      className={clsx(
        UI,
        "absolute top-[107px] right-14 bottom-12 left-[60px] flex flex-col overflow-hidden rounded-[20px] bg-[#2d2d2d] shadow-[0_0_0_1px_#000,0_36px_80px_10px_rgba(0,0,0,0.6)]",
      )}
    >
      <TitleBar />
      <TabStrip />
      <Ribbon />
      <FormulaBar />
      <div className="h-[6px] shrink-0 bg-linear-to-b from-[#a8a8a8] via-white to-[#a8a8a8]" />
      <Sheet />
      <SheetTabs />
      <StatusBar />
    </main>
  );
}

/* Marker scrawl over the document name */
function Scribble() {
  return (
    <svg
      width="450"
      height="165"
      viewBox="0 0 1350 495"
      fill="none"
      stroke="#000"
      strokeWidth={19}
      strokeLinecap="round"
      strokeLinejoin="round"
      className="pointer-events-none absolute top-[50px] left-[1220px]"
      aria-hidden="true"
    >
      <path
        fill="#000"
        d="M125 165 180 130 240 105 340 115 400 140 470 145 590 142 640 120 720 112 830 122 940 150 1010 155 1070 190 1150 190 1190 235 1165 285 1090 322 1000 322 880 330 820 360 730 372 660 330 600 330 550 355 440 370 350 350 290 375 230 385 170 380 120 350 130 300 90 270 100 210z"
      />
      <path d="M230 145Q290 90 334 38M275 130Q360 40 405 45q15 10-35 75" />
      <path d="M125 150Q150 80 260 76q70 2 120 40M210 120Q250 85 330 95" />
      <path d="M190 125Q90 108 65 150q-20 50 5 85M70 200q5 20 20 30" />
      <path d="M85 235 48 270 95 300M60 282q5 30 40 40M95 310 62 356M82 350q-15 50 50 50l60-5" />
      <path d="M100 330q-5 50 60 50M150 370q40 40 200 30 130-15 200-30" />
      <path d="M240 405q50 50 160 48 140-10 145-75" />
      <path d="M270 370q20 40 90 25M330 370q60 30 140 5M430 340q20 40 80 25" />
      <path d="M380 120q60-20 130-8 60 10 90 35M450 135q-5-45 50-48 45 2 35 55" />
      <path d="M600 130q50-45 140-35M720 105q20-35 55-22 30 8 20 35" />
      <path d="M760 100q70-20 130 5 50 20 65 55M820 95q70 0 100 50" />
      <path d="M1000 150q30-15 60 0 15 10 15 35M1090 190q60-10 90 15 20 15 15 60" />
      <path d="M560 365q60 5 120-15M640 300q20 80 90 82 80-10 100-50M830 345q40 0 55-20" />
      <path d="M885 335q20 18 80 18 45-2 50-30M1000 325q90 10 150-20 20-20 25-60" />
      <path d="M1190 218q110 5 106 50-8 45-80 43-30-2-55-12" />
      <path d="m1198 264 15 14 20-16" stroke="#707070" strokeWidth={8} strokeLinecap="butt" />
      <g stroke="#9a9a9a" strokeWidth={6}>
        <path d="M140 308q5 12 16 18M160 134l5 4M370 148h5M628 150h3M638 176h8" />
        <path d="M636 310v3M408 184v1M524 196v1M770 150h1M952 177h1M980 232h1" strokeWidth={5} />
      </g>
      <path d="M495 133h12M663 307h4" stroke="#eee" strokeWidth={9} strokeLinecap="butt" />
    </svg>
  );
}

export default function App() {
  return (
    <div className="relative h-screen min-h-[1000px] w-full overflow-hidden bg-[linear-gradient(180deg,#74b6e4_0%,#74b6e4_11%,#f0d766_16%,#efc456_35%,#e8a040_46%,#dc8538_49%,#e8b850_51%,#dfa548_68%,#c87f3c_76%,#4a82b4_79%,#3d66a4_90%,#2c4a8a_100%)]">
      <MenuBar />
      <BackWindow />
      <BrowserWindow />
      <ExcelWindow />
      <Scribble />
    </div>
  );
}
